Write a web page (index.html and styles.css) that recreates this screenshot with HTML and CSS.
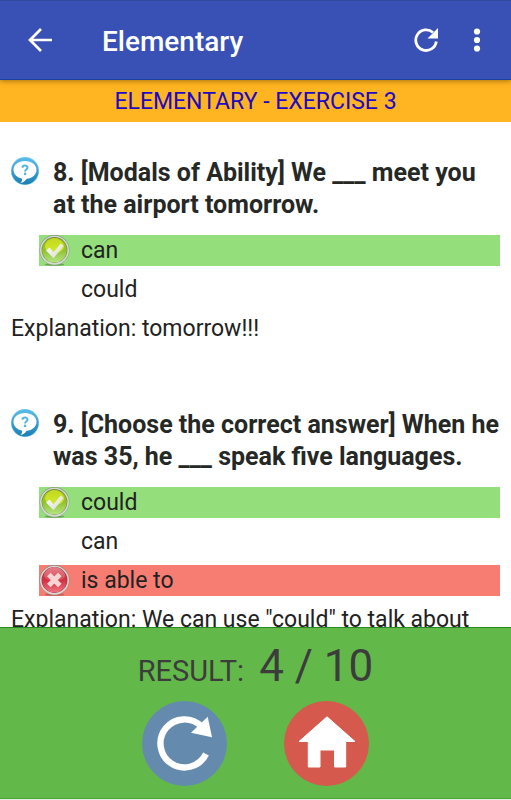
FILE: index.html
```html
<!DOCTYPE html>
<html lang="en">
<head>
<meta charset="utf-8">
<meta name="viewport" content="width=device-width, initial-scale=1">
<title>Elementary</title>
<link rel="stylesheet" href="styles.css">
</head>
<body>
<svg class="defs" width="0" height="0" aria-hidden="true">
  <defs>
    <linearGradient id="lime" x1="0" y1="0" x2="0" y2="1"><stop offset="0" stop-color="#a5c516"/><stop offset=".5" stop-color="#8fc32a"/><stop offset="1" stop-color="#b4e486"/></linearGradient>
    <linearGradient id="lime-shine" x1="0" y1="0" x2="0" y2="1"><stop offset="0" stop-color="#c2d820"/><stop offset="1" stop-color="#d2ea2c"/></linearGradient>
    <linearGradient id="red" x1="0" y1="0" x2="0" y2="1"><stop offset="0" stop-color="#c44752"/><stop offset=".5" stop-color="#d62f42"/><stop offset="1" stop-color="#ee7580"/></linearGradient>
    <linearGradient id="red-shine" x1="0" y1="0" x2="0" y2="1"><stop offset="0" stop-color="#e0808a"/><stop offset="1" stop-color="#dc4a58"/></linearGradient>
    <linearGradient id="blue" x1="0" y1="0" x2="0" y2="1"><stop offset="0" stop-color="#59bdec"/><stop offset="1" stop-color="#1c7fb4"/></linearGradient>
    <linearGradient id="mark" x1="0" y1="0" x2="1" y2="1"><stop offset="0" stop-color="#ffffff"/><stop offset="1" stop-color="#d8d8d0"/></linearGradient>
    <symbol id="help" viewBox="0 0 28 28">
      <circle cx="14" cy="14" r="14" fill="#8accea"/>
      <circle cx="14" cy="14" r="13.500" fill="url(#blue)"/>
      <path d="M14 4C7.500 4 2.500 7.500 2.500 12.800c0 4.500 3.500 7.700 8.500 8.900.3 1.800-.4 3.200-1.700 4.300 3-.5 5-2 6-4C21.500 21.500 25.500 17.500 25.500 12.800 25.500 7.500 20.500 4 14 4z" fill="#fff"/>
      <path d="M11.500 10.800c0-3 5-2.900 5-.3 0 2-2.400 1.900-2.400 3.900" fill="none" stroke="#52b5e2" stroke-width="2"/>
      <circle cx="14.100" cy="16.900" r="1.300" fill="#52b5e2"/>
    </symbol>
    <symbol id="right" viewBox="0 0 31 31">
      <ellipse cx="15.500" cy="29.500" rx="10" ry="1.300" fill="#476b3d" opacity=".5"/>
      <circle cx="15.500" cy="15" r="15" fill="#8b9786"/>
      <circle cx="15.500" cy="15.200" r="14.500" fill="#d6dad3"/>
      <circle cx="15.500" cy="15" r="12.900" fill="#6f8a3c"/>
      <circle cx="15.500" cy="15.200" r="12.300" fill="url(#lime)"/>
      <path d="M6 12a9.500 9 0 0 1 19 0c-1 4-5.500 6-9.500 6S7 16 6 12z" fill="url(#lime-shine)"/>
      <path d="M7 15.500l3.500-3 4 4.800 7.300-8.800 2.700 2.600-10 12.200z" fill="url(#mark)"/>
    </symbol>
    <symbol id="wrong" viewBox="0 0 31 31">
      <ellipse cx="15.500" cy="29.500" rx="10" ry="1.300" fill="#8b4740" opacity=".5"/>
      <circle cx="15.500" cy="15" r="15" fill="#8f8580"/>
      <circle cx="15.500" cy="15.200" r="14.500" fill="#dcd5d2"/>
      <circle cx="15.500" cy="15" r="12.900" fill="#96353e"/>
      <circle cx="15.500" cy="15.200" r="12.300" fill="url(#red)"/>
      <path d="M5 11a10.500 9 0 0 1 21 0c-1 3-6 5-10.500 5S6 14 5 11z" fill="url(#red-shine)"/>
      <path d="M9.800 9.500l11 11M20.800 9.500l-11 11" stroke="#f7d4d4" stroke-width="5"/>
    </symbol>
  </defs>
</svg>

<header class="bar">
  <button class="icon-button" type="button" aria-label="Back">
    <svg width="24" height="24" viewBox="0 0 24 24"><path d="M24 12H2M13 1L2 12l11 11" fill="none" stroke="#fff" stroke-width="2.700"/></svg>
  </button>
  <h1 class="title">Elementary</h1>
  <button class="icon-button" type="button" aria-label="Reload">
    <svg width="24" height="24" viewBox="0 0 24 24"><path d="M19 4.500A10.300 10.300 0 1 0 22.300 13.500" fill="none" stroke="#fff" stroke-width="2.800"/><path d="M24 0v10.500H13.500z" fill="#fff"/></svg>
  </button>
  <button class="icon-button" type="button" aria-label="More options">
    <svg width="24" height="24" viewBox="0 0 24 24" fill="#fff"><circle cx="12" cy="3.500" r="3.100"/><circle cx="12" cy="12" r="3.100"/><circle cx="12" cy="20.500" r="3.100"/></svg>
  </button>
</header>
<h2 class="banner">ELEMENTARY - EXERCISE 3</h2>

<main class="quiz">
  <section class="item">
    <div class="question">
      <svg class="help" aria-hidden="true"><use href="#help"/></svg>
      <h3 class="prompt">8. [Modals of Ability] We ___ meet you at the airport tomorrow.</h3>
    </div>
    <ul class="options">
      <li class="option correct"><svg class="mark" aria-hidden="true"><use href="#right"/></svg>can</li>
      <li class="option"><span class="mark"></span>could</li>
    </ul>
    <p class="explanation">Explanation: tomorrow!!!</p>
  </section>
  <section class="item">
    <div class="question">
      <svg class="help" aria-hidden="true"><use href="#help"/></svg>
      <h3 class="prompt">9. [Choose the correct answer] When he was 35, he ___ speak five languages.</h3>
    </div>
    <ul class="options">
      <li class="option correct"><svg class="mark" aria-hidden="true"><use href="#right"/></svg>could</li>
      <li class="option"><span class="mark"></span>can</li>
      <li class="option incorrect"><svg class="mark" aria-hidden="true"><use href="#wrong"/></svg>is able to</li>
    </ul>
    <p class="explanation">Explanation: We can use "could" to talk about</p>
  </section>
</main>

<footer class="result">
  <p class="score"><span>RESULT:</span><span class="points">4 / 10</span></p>
  <div class="actions">
    <button class="round again" type="button" aria-label="Try again">
      <svg width="85" height="85" viewBox="0 0 85 85"><path d="M59.500 25.500A24 24 0 1 0 64 53" fill="none" stroke="#fff" stroke-width="6.400"/><path d="M65.700 15.700L70 36.300 49 31.700z" fill="#fff"/></svg>
    </button>
    <button class="round home" type="button" aria-label="Home">
      <svg width="85" height="85" viewBox="0 0 85 85"><path d="M43 15.800L71 40.500H61.700V66H50.500V49H36V66H24.300V40.500H15z" fill="#fff" stroke="#fff" stroke-width="1" stroke-linejoin="round"/></svg>
    </button>
  </div>
</footer>
</body>
</html>
```
FILE: styles.css
```css
* {
  box-sizing: border-box;
}

body {
  display: flex;
  flex-direction: column;
  height: 100vh;
  margin: 0;
  border-bottom: 1px solid #e4eedf;
  background: #fff;
  color: #222;
  font: 23px/32px Roboto, sans-serif;
}

h1, h2, h3, p, ul {
  margin: 0;
  padding: 0;
}

button {
  display: flex;
  align-items: center;
  justify-content: center;
  padding: 0;
  border: 0;
  background: none;
}

.defs {
  position: absolute;
}

.bar {
  position: relative;
  display: flex;
  align-items: center;
  flex: none;
  height: 80px;
  padding: 0 9px 0 14px;
  border-top: 1px solid #3349a0;
  border-bottom: 1px solid #1e3f9b;
  background: #3951b5;
  box-shadow: 0 1px 5px rgba(90, 60, 0, 0.55);
}

.icon-button {
  width: 51px;
  height: 51px;
}

.title {
  flex: 1;
  padding: 4px 0 0 37px;
  color: #fff;
  font-size: 28px;
  font-weight: 500;
  line-height: 36px;
}

.banner {
  flex: none;
  height: 42px;
  padding-top: 1px;
  background: #ffb421;
  color: #2108c6;
  font-size: 23px;
  font-weight: 400;
  line-height: 42px;
  text-align: center;
}

.quiz {
  flex: 1;
  min-height: 0;
  padding: 35px 11px 0;
  overflow: hidden;
}

.item {
  margin-bottom: 64px;
}

.question {
  display: flex;
  align-items: flex-start;
  gap: 14px;
}

.help {
  flex: none;
  width: 28px;
  height: 28px;
}

.prompt {
  color: #252825;
  font-size: 25px;
  font-weight: 700;
  line-height: 32px;
}

.options {
  display: flex;
  flex-direction: column;
  gap: 8px;
  margin: 14px 0 8px 28px;
  list-style: none;
}

.option {
  display: flex;
  gap: 11px;
  height: 31px;
}

.mark {
  flex: none;
  width: 31px;
  height: 31px;
}

.correct {
  background: #94df7b;
}

.incorrect {
  background: #f77d73;
}

.explanation {
  height: 32px;
}

.result {
  flex: none;
  padding: 14px 0 12px;
  border-top: 1px solid #268a22;
  border-bottom: 1px solid #4ea63a;
  background: #63b84a;
  color: #3c3c3c;
}

.score {
  display: flex;
  align-items: baseline;
  justify-content: center;
  gap: 15px;
  height: 48px;
  font-size: 29px;
  line-height: 48px;
}

.points {
  font-size: 44px;
}

.actions {
  display: flex;
  justify-content: center;
  gap: 57px;
  margin-top: 11px;
}

.round {
  width: 85px;
  height: 85px;
  border-radius: 50%;
}

.again {
  background: #648bae;
}

.home {
  background: #d6594d;
}
```
